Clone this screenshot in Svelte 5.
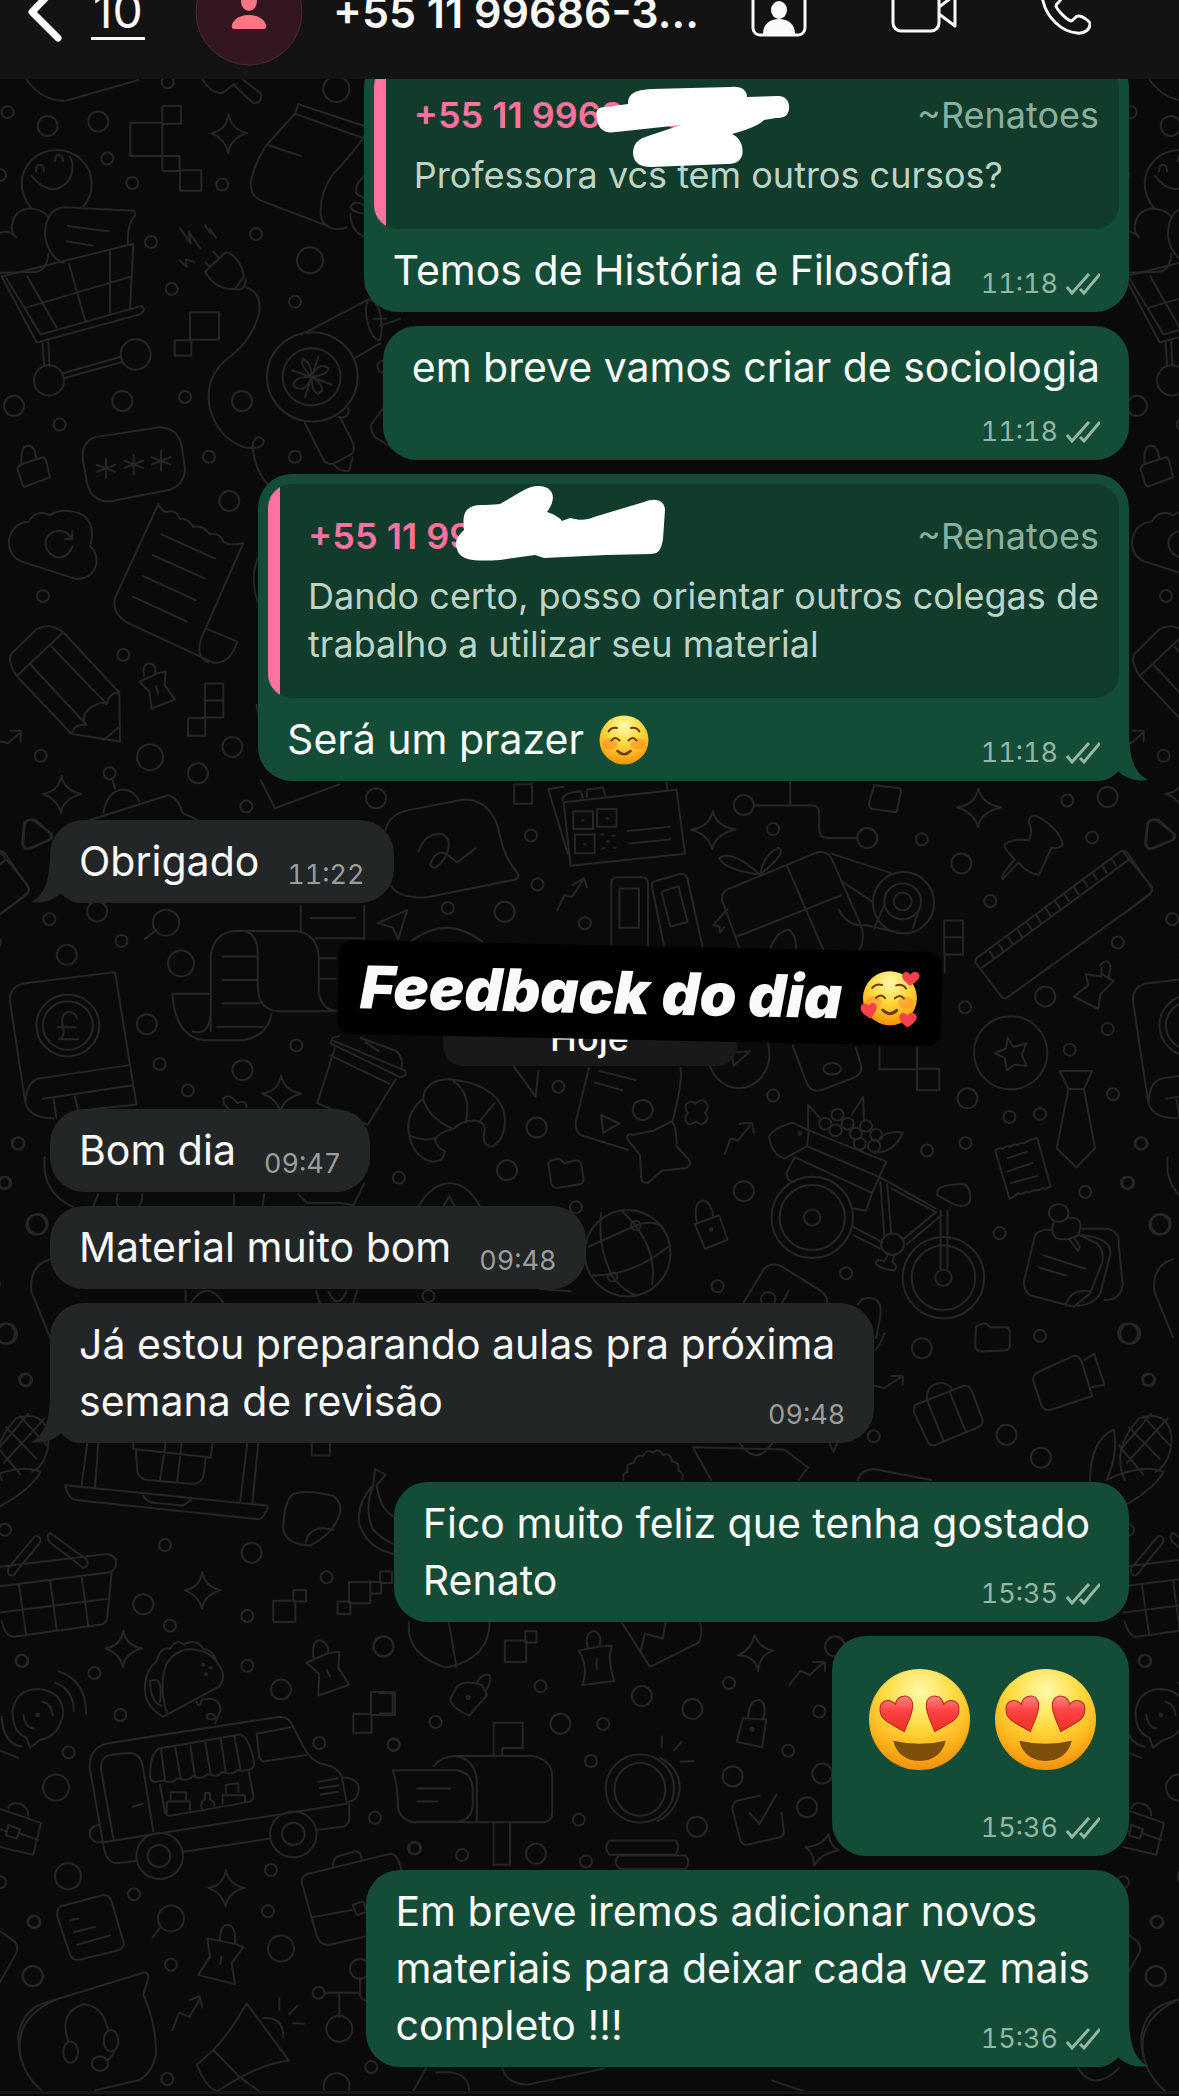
<script lang="ts">
    interface Quote {
        phone: string;
        author: string;
        text: string;
        mark: string;
        markClass: string;
    }

    interface Message {
        text?: string;
        time: string;
        mine?: boolean;
        quote?: Quote;
        emoji?: "smile" | "hearts";
        // "beside": time after the text, "over": time in the last line, "below": time on its own line
        layout: "beside" | "over" | "below";
        tail?: boolean;
    }

    interface Sketch {
        x: number;
        y: number;
        sx: number;
        sy: number;
        small: number[][];
        medium: number[][];
        large: number[][];
        ellipses: number[][];
        paths: string[];
    }

    const contact = "+55 11 99686-3...";

    const markA =
        "M11 38C9 30 12 27 20 27L42 24C42 14 48 10 66 9L145 7C155 6 161 10 161 17L192 16C200 16 204 22 203 29C202 36 198 38 190 38L178 40C172 46 160 50 146 54C155 58 158 68 156 76C153 82 150 84 140 84L65 87C53 87 47 82 47 72C48 62 53 59 62 56L95 45L30 52C18 54 12 49 11 38Z";
    const markB =
        "M10 67C9 61 13 56 18 51C17 42 17 34 22 30C28 24 40 27 54 25C72 15 82 6 94 7C108 8 111 20 101 33C109 36 113 38 116 42L124 39C135 42 141 41 148 38L198 23C210 18 219 22 219 31L217 60C215 72 212 75 204 75L160 76L98 79L89 76L54 81C36 82 17 83 12 73Z";

    const earlier: Message[] = [
        {
            text: "Temos de História e Filosofia",
            time: "11:18",
            mine: true,
            layout: "beside",
            quote: {
                phone: "+55 11 99686-3••4",
                author: "~Renatoes",
                text: "Professora vcs tem outros cursos?",
                mark: markA,
                markClass: "mark-a",
            },
        },
        { text: "em breve vamos criar de sociologia", time: "11:18", mine: true, layout: "below" },
        {
            text: "Será um prazer",
            time: "11:18",
            mine: true,
            emoji: "smile",
            layout: "beside",
            tail: true,
            quote: {
                phone: "+55 11 99686-••",
                author: "~Renatoes",
                text: "Dando certo, posso orientar outros colegas de\ntrabalho a utilizar seu material",
                mark: markB,
                markClass: "mark-b",
            },
        },
        { text: "Obrigado", time: "11:22", layout: "beside", tail: true },
    ];

    const today: Message[] = [
        { text: "Bom dia", time: "09:47", layout: "beside" },
        { text: "Material muito bom", time: "09:48", layout: "beside" },
        {
            text: "Já estou preparando aulas pra próxima\nsemana de revisão",
            time: "09:48",
            layout: "over",
            tail: true,
        },
        {
            text: "Fico muito feliz que tenha gostado\nRenato",
            time: "15:35",
            mine: true,
            layout: "over",
        },
        { time: "15:36", mine: true, emoji: "hearts", layout: "below" },
        {
            text: "Em breve iremos adicionar novos\nmateriais para deixar cada vez mais\ncompleto !!!",
            time: "15:36",
            mine: true,
            layout: "over",
            tail: true,
        },
    ];

    const sparkle = (x: number, y: number) =>
        `M${x} ${y - 43}q8 35 56 42q-52 12 -57 44q-10 -32 -52 -44q45 -5 53 -42z`;
    const asterisk = (x: number, y: number) =>
        `M${x} ${y - 22}v44M${x - 28} ${y - 8}l56 16M${x - 28} ${y + 8}l56 -16`;
    const ticks = Array.from({ length: 14 }, (_, i) => `M${1104 + i * 23} ${385 - i * 16}l10 14`).join("");

    // Wallpaper drawings, one block per area of the tile
    const sketches: Sketch[] = [
        {
            x: 0, y: 80, sx: 0.3333, sy: 0.4464,
            small: [[23, 72], [322, 176], [397, 231], [667, 234], [453, 363], [515, 468], [768, 345], [885, 497], [179, 772], [555, 710], [627, 844], [885, 844], [129, 1156], [370, 1288], [122, 1514], [329, 1553], [0, 213], [503, 5], [1150, 642]],
            medium: [[143, 103], [295, 93], [42, 730], [367, 719], [726, 719], [688, 943], [697, 1494], [594, 1553]],
            large: [[1009, 20], [930, 404], [450, 1517]],
            ellipses: [[147, 673, 45, 34], [407, 615, 45, 34], [937, 665, 136, 100], [935, 665, 87, 64]],
            paths: [
                "M80 0Q130 50 200 46L415 0M608 0Q640 35 670 28L705 8M700 10L760 52Q790 50 782 30L730 0",
                "M487 58h56v40h-56zM391 96h96v74h-96zM487 170h52v34h-52zM540 202h64v46h-64z",
                sparkle(686, 120),
                "M895 54L1104 106L1090 130L885 76L895 54M885 76L800 145Q760 190 752 232Q752 262 790 272L975 325Q1010 340 1040 330M1090 130Q1040 180 1000 210Q960 250 962 300Q964 320 985 328M800 145L903 170M1100 210Q1060 235 1070 255L1104 270M1104 285Q1060 265 1052 285Q1060 300 1104 300M1052 300Q1050 340 1104 355",
                "M95 289Q65 262 65 232A105 75 0 0 1 275 232Q275 262 250 284M95 215Q150 265 200 230Q230 200 210 172M108 205q0 -15 12 -15q12 0 12 15M165 182q0 -14 10 -14q14 0 15 14",
                "M145 308Q130 290 90 288Q40 290 35 330Q35 345 48 352Q25 335 0 342M145 390Q140 430 100 430L0 432",
                "M190 410Q145 395 135 350Q135 290 190 285L400 293Q412 300 400 308Q380 330 384 370M203 327L326 339M200 361L278 371",
                "M5 440L400 367L390 513M5 440L110 588L420 525Q440 515 425 506L122 570L20 445M82 440L170 555M207 412L256 540M330 384V520M78 510L395 440M128 590L132 640M145 586L148 640M190 657L362 620M192 668L365 632",
                "M540 332L572 366L566 340L600 376M615 325L632 344L630 334L648 353M538 404L560 418L558 402L584 408",
                "M615 430L678 385Q720 395 732 440L705 468Q650 472 615 430zM705 468Q735 475 738 445M640 385l15 12M615 408l15 10M738 465Q785 475 778 520Q760 580 690 620Q615 660 628 730Q650 800 730 822Q790 830 792 808Q770 790 758 815Q760 870 805 908",
                "M570 520h87v62h-87zM524 583h50v34h-50z",
                "M935 665Q895 635 910 625Q935 635 935 665Q955 630 985 645Q985 660 935 665Q985 690 955 703Q935 700 935 665Q915 705 880 685Q880 665 935 665M955 620L915 710M876 650L995 682",
                "M905 570L1105 492M1060 625L1140 590M1105 492Q1090 510 1105 550Q1120 585 1140 582Q1150 560 1140 520Q1125 490 1105 492zM1120 535h40M1140 550L1200 535M915 768L970 850Q980 862 1000 860L1050 840Q1065 835 1060 815L1020 755M1000 860Q1020 880 1048 875L1058 845M1015 755Q1050 760 1045 735",
                "M1165 720L1115 770Q1110 785 1125 800L1200 835",
                "M285 800L480 778Q535 780 545 820L555 870Q555 905 510 918L330 944Q275 945 262 905L248 850Q245 810 285 800z",
                asterisk(318, 870) + asterisk(401, 861) + asterisk(483, 853),
                "M60 862L128 845Q135 845 138 852L150 890L75 911Q68 911 66 903L52 870zM65 860Q60 819 85 819Q105 820 109 849",
                "M85 990Q40 990 27 1030Q25 1070 70 1080L225 1117Q280 1120 290 1080Q290 1055 270 1045Q290 1000 250 975Q190 955 150 975Q110 960 85 990zM218 1045Q200 1075 165 1068Q130 1055 138 1028Q155 1005 195 1012L215 1025M217 1010V1028H195",
                "M475 950L345 1160Q335 1195 380 1215L640 1305Q690 1310 712 1258L622 1230M475 950q15 22 30 17q25 -5 35 17q20 -5 40 17q30 -5 50 17q30 -5 40 17q20 10 60 2L610 1240Q580 1290 625 1305M485 1018L645 1072M458 1064L615 1117M428 1111L587 1165M400 1158L560 1213",
                "M50 1335Q20 1300 35 1285L110 1230Q150 1215 190 1237L358 1372L360 1482L215 1465zM50 1335L190 1237M92 1310L260 1445Q240 1430 265 1410Q300 1390 320 1398Q330 1370 358 1372M155 1270L320 1398M260 1445Q225 1440 215 1465M312 1478L360 1448",
                "M432 1335Q425 1308 448 1307Q472 1310 465 1330L497 1325L494 1355L525 1388L455 1408L448 1370L418 1348L465 1332M468 1358l6 15",
                "M615 1352h55v76h-55zM615 1390h55M564 1429h52v40h-52z",
                "M0 1482L25 1485L60 1462M30 1458h32v24M780 1060Q740 1120 785 1190M770 1400L790 1480",
            ],
        },
        {
            x: 0, y: 780, sx: 0.3571, sy: 0.4337,
            small: [[690, 61], [1487, 128], [1505, 241], [138, 321], [340, 371], [1254, 295], [830, 612], [447, 655], [526, 716], [52, 838], [15, 929], [1117, 917], [73, 1384], [1200, 1190]],
            medium: [[1053, 42], [1413, 304], [187, 403], [411, 563], [679, 669], [1503, 801], [1420, 900], [106, 1024], [20, 1277], [272, 303]],
            large: [[507, 423]],
            ellipses: [[465, 329, 37, 30], [190, 566, 88, 71], [190, 566, 70, 56]],
            paths: [
                sparkle(172, 33) + sparkle(787, 724),
                "M70 100Q80 88 100 92L145 125Q150 132 140 138L85 158Q65 160 65 145zM0 165L80 245Q85 255 75 262L0 310",
                "M290 75Q300 25 345 22Q380 25 390 50M235 97L470 35Q500 40 510 75L560 95M315 0L322 20M730 0L770 65L950 10",
                "M1080 115Q1090 80 1140 70L1300 45Q1370 45 1395 110Q1410 180 1450 215Q1455 228 1440 230L1200 270Q1120 275 1095 245M1172 165Q1190 120 1240 125Q1270 140 1245 180Q1215 215 1205 195Q1220 160 1250 170L1280 190L1332 157",
                "M1440 10h50v45h-50zM438 345L405 367",
                "M590 580V405Q600 350 660 348H830Q890 355 893 410V490Q900 530 945 533H780Q725 530 722 480V400Q720 350 680 348M590 493H483Q490 590 570 600H680Q750 590 760 540M540 580Q585 590 590 540M623 407h95M623 461h95M623 515h105M608 569h130",
                "M842 290V350M1020 290V370M870 318h125M885 365h135M895 411h45M895 458h45M1058 330L1140 300L1115 367L1100 340zM1150 372Q1250 310 1350 372",
                "M250 760L382 748L322 443L60 470Q25 480 28 510L70 740Q80 780 150 780M72 740Q75 695 110 688L358 658M120 735L372 704M150 735L158 780M210 730L218 760M215 550Q210 533 190 535Q170 540 175 565Q185 590 165 598H218M162 570h50",
                "M950 590Q925 592 927 608L1120 685Q1140 685 1135 670L930 600M1010 595L1110 625Q1130 640 1125 665M938 618L888 745L1030 795L1108 690M925 635L1090 700M1025 605L1060 625",
                "M1185 735Q1190 690 1260 690Q1380 700 1410 760Q1425 820 1380 845Q1350 845 1355 815Q1365 790 1330 785Q1290 785 1270 805Q1230 810 1218 830Q1225 850 1245 855Q1245 880 1210 880Q1150 870 1143 800Q1145 760 1185 735Q1200 780 1270 805M1270 695Q1320 720 1305 790M1150 820Q1190 835 1218 825M1345 785L1385 745",
                "M1440 662L1500 730L1508 670M690 755Q690 735 665 745Q640 720 625 735Q625 750 640 757",
                "M125 870Q115 950 205 985M260 985L275 955M330 955Q320 985 340 985H385Q400 975 398 955M655 985V955M740 955L735 985M835 955L860 975H950L990 980L1020 930M1170 985Q1210 930 1260 930Q1310 930 1345 985M1240 985L1258 960L1275 985",
                "M140 1105Q80 1120 88 1180L140 1285M520 1205V1178M535 1205Q580 1150 625 1205M885 1178L895 1205M1000 1178L990 1205M920 1180Q945 1225 970 1180",
            ],
        },
        {
            x: 540, y: 780, sx: 0.4075, sy: 0.4464,
            small: [[572, 110], [937, 133], [1294, 46], [1355, 129], [1105, 271], [110, 321], [1418, 364], [1043, 509], [1393, 558], [1300, 604], [45, 687], [572, 707], [1406, 704], [1152, 755], [1227, 748], [1474, 814], [1044, 813], [950, 830], [1440, 902], [1338, 923], [88, 957], [1128, 1015], [751, 1105], [436, 1134], [1227, 1245], [1492, 1343], [819, 1470]],
            medium: [[1393, 38], [1034, 187], [1240, 485], [1049, 713], [500, 921], [1520, 996], [937, 1273], [1443, 1240], [1145, 1467], [1229, 1518], [252, 739], [500, 56], [803, 130]],
            large: [],
            ellipses: [
                [892, 275, 75, 69], [890, 272, 45, 40], [890, 272, 22, 20], [1155, 611, 90, 82], [488, 615, 75, 75], [717, 647, 22, 13],
                [668, 980, 100, 91], [668, 980, 80, 73], [668, 980, 20, 18], [990, 1115, 100, 91], [990, 1115, 78, 72], [990, 1115, 20, 18],
                [865, 1040, 28, 24], [215, 1060, 105, 97], [235, 998, 12, 10], [178, 1113, 12, 10], [1273, 970, 24, 20], [420, 1007, 3, 3], [638, 792, 3, 3], [560, 1163, 18, 16],
                [700, 770, 15, 13], [730, 750, 15, 13], [755, 770, 15, 13], [725, 785, 15, 13], [775, 792, 15, 13], [800, 775, 15, 13], [825, 795, 15, 13], [820, 820, 15, 13], [785, 815, 15, 13],
            ],
            paths: [
                "M58 50L335 22L356 165L75 192zM68 165L20 20L58 15M55 45Q55 28 100 25L105 40M115 38V22L155 17L160 36M310 5L313 22",
                "M82 70h48v40h-48zM140 65h48v40h-48zM86 122h48v42h-48zM103 90h4M163 86h4M108 144h4M150 122h6M178 125h6M164 138h6M153 153h6M180 152h6M215 114L318 105M218 142L320 133",
                sparkle(424, 112) + sparkle(1076, 62),
                "M524 57H670Q685 57 685 75V110Q685 130 705 130H780M614 0V57M820 12L880 18Q888 20 885 30L875 72L815 65Q805 60 808 50z",
                "M1200 95Q1200 75 1222 82Q1275 110 1283 145Q1275 155 1255 152L1225 212Q1195 210 1175 185L1135 222Q1128 215 1165 178Q1135 150 1140 145Q1160 130 1200 135Q1210 115 1200 95z",
                "M1490 95Q1500 85 1515 92L1552 118Q1560 130 1550 135L1495 155Q1485 150 1485 140zM42 292L60 258L78 262L105 225M80 235L108 220L115 240",
                "M175 375V232Q175 218 190 218H250Q265 218 265 232V375M195 243h48v88h-48zM305 375L275 240Q272 228 285 226L345 210Q358 210 362 222L400 378M298 250L340 238L362 318L320 328z",
                "M490 378L447 270Q445 250 460 245L680 162Q705 158 715 175L785 320Q800 350 785 380M485 350L740 258M605 190L695 380M540 212Q450 200 440 175Q470 155 540 212Q550 165 585 152Q610 160 540 212M565 378Q580 340 610 335Q630 345 628 378",
                "M715 165L860 208M742 228L815 272M733 290Q755 330 800 325L885 343M820 332L845 280M915 332L930 290M460 290L425 325L440 328L442 342L452 330",
                "M992 315h46v76h-46zM992 352h46M993 391v40M833 600v48h95M925 600v95h55v-48h-55",
                "M1070 400L1425 160Q1435 155 1445 168L1500 240Q1503 252 1495 258L1145 488Q1135 492 1128 480L1068 408zM1085 420L1443 180" + ticks,
                "M1375 415Q1395 395 1400 420L1395 445M1378 420L1378 440L1340 435L1345 460L1310 485L1370 513L1375 480L1408 450L1378 435",
                "M1148 578l14 20 32 -8 -12 25 12 25 -30 -2 -18 12 -6 -28 -25 -10 28 -10z",
                "M1275 652h80l-20 40h-38zM1297 692L1268 825L1316 868L1362 825L1335 692",
                "M1117 830q10 -8 18 -4q10 -8 18 -4q10 -8 18 -4q10 -8 18 -4q10 -8 31 -12L1253 910q-12 8 -20 4q-12 8 -20 4q-12 8 -20 4q-12 8 -20 4q-10 8 -21 12zM1148 847L1195 833M1147 877L1208 858M1155 903L1220 887",
                "M120 645L88 765Q85 790 105 797L215 828M345 645Q350 680 325 765M145 652L235 672M135 678L202 695M150 750L195 770L155 790z",
                "M322 765Q335 770 335 820L365 850Q375 865 355 870L300 875L265 902Q245 905 248 880L245 840L215 805Q210 790 230 795L280 785z",
                "M360 725q10-10 22 0q15-15 28 0q5 10-5 20q10 15 0 22q-10 8-22-2q-18 12-25 0q-5-10 5-20q-10-10-3-20z",
                "M453 838L468 803L485 808L515 775M490 770L520 768L525 790M470 610L515 608L475 640zM620 595L655 680Q665 700 690 695L775 665Q795 655 785 630L775 600",
                "M20 858Q30 848 50 850L60 858L90 852Q100 852 102 865L107 895Q105 905 95 906L40 914Q28 912 27 900zM1070 1225Q1085 1215 1095 1218L1105 1226H1145Q1155 1230 1153 1245V1268Q1150 1278 1140 1278L1078 1280Q1068 1276 1068 1265z",
                "M660 785L850 855L815 925L625 845M655 820L835 890M562 800Q570 780 620 768L660 785L655 820L600 848Q570 840 562 800zM625 845L605 880Q605 900 625 900M658 780V728L688 758M765 750L793 710L795 765M835 800Q860 785 890 790Q870 835 820 835",
                "M835 890L972 960M852 905L862 1015M835 900L845 1020M862 915L972 968L890 1030M766 1000L840 1035M770 1020L835 1050M983 965V1095M1000 965V1095M975 920Q985 905 1040 905Q1060 915 1055 945Q1040 960 1015 950L975 930zM855 1060L845 1078Q820 1070 825 1085Q840 1098 870 1098Q880 1090 865 1080L870 1062M815 925L800 965L770 960M900 1040L985 975",
                "M120 1045L235 998Q270 985 300 1000M150 970Q140 1050 180 1115Q210 1150 240 1155M200 965Q290 1040 275 1130M130 1110Q230 1110 315 1045",
                "M380 995L440 975L460 1030L405 1050zM385 992Q375 945 400 942Q420 945 425 978M500 1170L550 1095Q565 1080 590 1088L690 1145Q705 1155 705 1170M610 1145L595 1170",
                "M780 1175Q790 1155 820 1162Q840 1170 835 1200L825 1250M845 1240Q830 1280 812 1280M0 1140L75 1145",
                "M1255 1008Q1225 1005 1215 1020L1187 1125Q1190 1150 1205 1155L1310 1180L1350 1150L1380 1080Q1385 1045 1360 1035L1325 1020M1330 1020Q1400 1025 1400 1060L1375 1150Q1360 1175 1320 1178M1330 1005H1395Q1425 1015 1420 1040L1430 1130Q1425 1165 1385 1165M1290 1178Q1300 1140 1350 1145M1235 1065L1338 1095M1225 1092L1290 1110M1262 988Q1250 1010 1265 1025Q1290 1035 1320 1020Q1335 990 1315 982L1295 980M1300 1030L1320 1055L1325 1045L1310 1025",
                "M1225 1325L1310 1290Q1325 1290 1330 1305L1355 1380L1250 1412Q1235 1412 1230 1400L1210 1345Q1210 1330 1225 1325zM1335 1300L1360 1285L1385 1355L1355 1360",
                "M920 1400L1040 1357Q1055 1355 1060 1370L1085 1430Q1090 1445 1075 1450L970 1490Q955 1492 950 1480L917 1415zM950 1390Q945 1355 985 1350Q1010 1355 1010 1368M950 1390L990 1480M1005 1370L1045 1460M812 1355L845 1362L885 1338M862 1335H890V1355",
                "M1350 1568Q1350 1480 1408 1455Q1420 1510 1390 1568M1435 1568Q1400 1500 1470 1430Q1540 1410 1550 1470Q1550 1530 1510 1550M1420 1490L1480 1555M1445 1450L1520 1520M1480 1425L1545 1490M1540 1430L1440 1530M1500 1420L1425 1500M1390 1568Q1480 1530 1530 1550Q1500 1600 1380 1650Q1350 1620 1350 1568",
                "M205 1568q-5-15 10-18q-5-20 15-20q5-20 22-15q10-18 25-8q15-12 25 5q20-5 22 15q20 0 15 20q15 5 10 20M375 1495L420 1568M375 1495L600 1500L658 1540L635 1568M490 1485Q530 1540 570 1485M780 1568Q790 1540 830 1545L960 1568M710 1485L720 1505L730 1485",
            ],
        },
        {
            x: 0, y: 1430, sx: 0.3333, sy: 0.4247,
            small: [[495, 271], [510, 461], [742, 438], [980, 347], [67, 544], [283, 572], [361, 671], [206, 759], [742, 555], [958, 737], [1181, 742], [1125, 913], [813, 1036], [402, 1093], [103, 1159], [804, 1133], [513, 1259], [502, 1528], [1114, 1500], [15, 235], [1242, 985], [0, 1065], [956, 1325]],
            medium: [[755, 289], [430, 410], [1150, 509], [843, 611], [99, 1286], [1080, 1269]],
            large: [[168, 842], [204, 1051], [843, 1221], [1010, 1545], [513, 1150], [1018, 1410]],
            ellipses: [[479, 1003, 70, 54], [477, 1003, 34, 26], [880, 952, 70, 54], [880, 951, 34, 26], [212, 1465, 22, 25], [333, 1438, 22, 25], [300, 1492, 25, 17], [113, 671, 4, 3], [610, 553, 3, 2], [632, 560, 3, 2], [618, 575, 3, 2]],
            paths: [
                "M0 322L320 292Q350 295 348 315Q345 330 330 335L0 368M335 335L322 440Q320 455 305 458L40 487Q15 485 5 450M57 365L78 480M150 353L170 470M245 345L265 462M0 430L320 398M25 325L105 250Q125 248 120 265L40 342Q20 345 25 325zM150 242L260 305Q270 320 250 325L150 265Q135 250 150 242z",
                "M195 130L800 178Q808 185 795 195Q790 210 775 210L225 165Q205 160 195 130zM430 155Q445 172 465 172L550 178L572 165M262 30L245 130M295 30L285 135M742 30L720 172M775 30L757 175M400 30V45L632 65L638 30M408 50L412 100Q420 115 440 118L580 127Q610 125 612 100L617 65M497 30L480 120M545 30L532 122",
                sparkle(607, 378) + sparkle(370, 515) + sparkle(678, 1079),
                "M880 150Q920 140 1000 155Q1030 175 1018 200Q1000 245 930 272Q860 270 850 235Q850 170 880 150zM917 265Q930 220 1000 235",
                "M1125 92L1157 105L1130 130Q1140 190 1185 205M1125 92L1120 130Q1070 170 1078 220Q1100 280 1185 292M1120 130Q1090 190 1120 235Q1150 260 1185 270M935 30v30h55v-30",
                "M820 402h66v50h-66zM880 377h38v27h-38zM1013 404h38v29h-38zM1047 358h64v50h-64zM1111 358h33v27h-33zM1140 333h36v27h-36zM1060 669h55v44h-55zM1113 617h72v54h-72z",
                "M940 535Q935 495 960 495Q985 500 985 525L1018 522L1015 560L1048 600L955 625L958 575L920 548L985 525M980 565l10 15M660 1200Q660 1165 685 1165Q710 1170 705 1210L730 1218L695 1255L705 1305L595 1283L630 1240L622 1197L705 1210M665 1240l-5 18",
                "M490 675L655 605Q675 590 668 570Q640 525 600 520Q540 505 500 550Q475 600 500 665M490 675Q430 650 435 600Q440 560 470 545Q480 510 510 515Q530 490 550 505Q590 490 610 515Q640 520 650 545M450 590Q450 640 485 650M455 590Q490 580 480 640M590 640Q600 660 605 635Q660 625 662 660L645 690M645 680Q620 685 620 672Q640 660 650 685",
                "M90 748L80 725Q35 710 38 660Q50 610 115 610Q185 615 190 665Q180 720 120 730zM70 670Q75 700 100 703M128 640Q155 645 158 672M165 595Q220 610 222 662M175 568Q260 590 258 668M5 675Q10 740 65 745M0 755L55 772",
                "M320 738L840 675Q870 675 880 700L910 745Q930 775 960 785Q1010 790 1025 815L1040 875M1048 878V915Q1045 935 1020 935L950 942M810 962L550 993M410 1015L350 1020Q320 1018 312 985L270 800Q265 750 320 738M315 970L1040 880M340 962L303 800Q300 770 330 765L390 760Q420 762 428 790L460 945M398 887L428 880",
                "M478 750L720 717Q745 720 762 780Q765 800 742 800q-15 5-30 0q-15 15-45 5q-15 15-45 5q-15 15-45 5q-15 15-45 5q-15 15-45 5Q450 835 450 815Q450 760 478 750M483 750L495 825M525 745L542 820M570 738L585 815M615 732L632 810M662 726L677 805M703 722L722 800M480 835L495 900Q500 910 515 908L750 875Q762 870 760 860L745 800",
                "M870 700L770 715L778 770Q782 782 795 780L920 765M955 828L1015 820M960 843L1015 837M962 858L1015 852M1030 818Q1080 820 1076 850Q1070 875 1045 875M295 930Q265 935 270 955Q280 975 305 970M500 900V875H570V895M512 870V853H558V870M605 890Q600 875 615 870V855H630V870Q645 875 643 885M668 880V860H735V875M678 855V835L715 832V852",
                "M0 892L123 925L100 1000L0 982M25 890Q30 875 60 880Q85 888 85 908M25 930L60 940L50 962L18 955zM60 950L115 965M0 940L18 945",
                "M180 1122L310 1095Q330 1095 335 1110L372 1210Q370 1220 355 1225L235 1248Q215 1248 210 1235L172 1145Q170 1128 180 1122zM210 1155L235 1150M222 1182L285 1170M232 1212L330 1190M480 1172L457 1195M0 1180L45 1205Q55 1215 50 1230L0 1300",
                "M1205 1040Q1195 998 1170 998L925 1045Q905 1050 905 1065L950 1190Q960 1215 990 1212L1110 1190M940 1147L1055 1130M1095 1120L1110 1118M1058 1118L1090 1110L1100 1135L1070 1142zM1000 1030Q995 1005 1030 1000L1065 992Q1085 992 1085 1012",
                "M125 1555Q55 1510 55 1430Q65 1360 150 1345L430 1278Q445 1275 445 1290L430 1330Q470 1400 468 1470Q460 1510 420 1530L285 1555M205 1440Q175 1370 250 1352Q310 1355 325 1415M345 1460Q335 1480 318 1485",
                "M517 1413L537 1372L568 1382L600 1340M570 1342L598 1333L607 1360M590 1495L640 1460Q690 1420 740 1350L867 1485Q800 1490 720 1525L650 1557Q620 1550 590 1495zM640 1460L720 1525L775 1555M790 1385Q850 1380 850 1430M838 1365V1338M868 1375L892 1356M880 1397L912 1398",
                "M978 1325H1080M1018 1325V1382M1080 1290V1330Q1085 1345 1110 1345",
            ],
        },
        {
            x: 380, y: 1460, sx: 0.5096, sy: 0.4056,
            small: [[315, 558], [109, 646], [438, 651], [685, 550], [862, 620], [801, 717], [414, 742], [390, 887], [69, 957], [161, 974], [404, 990], [27, 701], [1500, 495], [1524, 1138]],
            medium: [[514, 582], [613, 614], [354, 650], [893, 460], [692, 780], [838, 856], [306, 971], [622, 904], [1522, 1272], [868, 773], [7, 460]],
            large: [],
            ellipses: [[510, 810, 67, 84], [510, 812, 50, 65], [173, 585, 3, 4], [730, 664, 3, 4]],
            paths: [
                "M57 400Q50 480 130 512Q215 490 215 400M135 400L150 510M245 445h42v53h-42zM285 422h22v28h-22zM0 575h25v50h-25",
                "M408 465Q400 425 420 422Q438 430 430 460L455 458Q445 490 460 545L397 555Q410 510 390 470L430 460M425 490v25M475 402L530 510L625 450Q635 430 628 402M512 470L520 428L555 440L560 402",
                "M735 432Q745 465 772 470Q745 480 742 520Q735 480 703 482Q730 465 735 432M803 555L825 520L843 530L870 500M850 498H873V520",
                "M150 560Q165 540 200 555L210 580L175 630Q140 610 138 590zM190 550Q200 525 215 530Q220 545 207 570M712 637L758 640L750 708L700 695zM722 635Q725 590 745 592Q760 600 752 637",
                "M25 765H150Q180 770 182 810V850Q180 890 150 892H60Q35 880 35 850Q35 800 25 765M105 755Q120 730 150 730H300Q338 740 338 780V870Q338 893 320 893H60M150 730Q190 740 190 800V890M223 730V648H280V710H240V730M223 898V998H255V898M73 810H138M73 842H112",
                "M550 735Q590 760 588 815Q580 870 545 890M553 708V682M577 716L592 695M590 744L615 742M450 938H580Q590 955 580 973H450Q438 955 450 938zM470 975H600Q610 990 600 1008H470Q455 990 470 975z",
                "M745 828L700 840Q690 848 692 865L708 940Q712 950 722 948L785 930Q795 925 792 910L788 870M725 870L745 897L778 825M880 922Q885 955 900 962Q865 970 852 1000Q850 965 835 955Q870 950 880 922",
                "M1568 1330Q1480 1380 1500 1480M90 1500L60 1568M110 1510Q180 1500 175 1568M240 1500Q250 1540 290 1540L440 1500M770 1530L840 1560M1370 1500Q1400 1560 1450 1500",
            ],
        },
    ];
</script>

{#snippet check()}
    <svg class="check" viewBox="0 0 34 22" aria-label="Entregue">
        <path d="M1 14L6 20L23 1M14 16L18 20L34 1" />
    </svg>
{/snippet}

{#snippet smile()}
    <svg class="emoji" viewBox="0 0 100 100" role="img" aria-label="☺️">
        <circle cx="50" cy="50" r="49" fill="url(#face)" />
        <ellipse cx="22" cy="58" rx="15" ry="11" fill="#ff7a2e" opacity="0.45" />
        <ellipse cx="78" cy="58" rx="15" ry="11" fill="#ff7a2e" opacity="0.45" />
        <g fill="none" stroke="#6b3a06" stroke-width="4" stroke-linecap="round">
            <path d="M19 33Q25 24 36 26M64 26Q75 24 81 33" />
            <path d="M25 51Q32 41 41 51M59 51Q68 41 75 51" />
            <path d="M37 72Q50 85 63 72" stroke-width="5" />
        </g>
    </svg>
{/snippet}

{#snippet heartEyes()}
    <svg class="emoji" viewBox="0 0 100 100" role="img" aria-label="😍">
        <circle cx="50" cy="50" r="50" fill="url(#face)" />
        <g fill="url(#heart)" stroke="#b3271d" stroke-width="1">
            <path d="M35 62C24 55 11 51 11 41C10 31 20 28 26 35C28 25 40 24 43 33C45 42 38 53 35 62Z" />
            <path d="M65 62C76 55 89 51 89 41C90 31 80 28 74 35C72 25 60 24 57 33C55 42 62 53 65 62Z" />
        </g>
        <path d="M24 71Q50 77 76 71C73 84 63 91 50 91C37 91 27 84 24 71Z" fill="#7d4e09" />
    </svg>
{/snippet}

{#snippet bubble(message: Message)}
    <li class="message" class:mine={message.mine} class:tailed={message.tail}>
        {#if message.tail}
            <svg class="tail" viewBox="-20 0 50 50" aria-hidden="true">
                <path d="M-20 0H11C11 26 16 42 30 49C20 51 8 48 0 40C-6 47 -14 50 -20 50Z" />
            </svg>
        {/if}
        {#if message.quote}
            <blockquote class="quote">
                <div class="quote-head">
                    <span class="phone">{message.quote.phone}</span>
                    <span class="author">{message.quote.author}</span>
                    <svg class="mark {message.quote.markClass}" viewBox="0 0 220 100" aria-hidden="true">
                        <path d={message.quote.mark} />
                    </svg>
                </div>
                <p class="quote-text">{message.quote.text}</p>
            </blockquote>
        {/if}
        <div class="body {message.layout}">
            {#if message.emoji === "hearts"}
                <p class="big-emoji">{@render heartEyes()}{@render heartEyes()}</p>
            {:else}
                <p class="text">{message.text}{#if message.emoji === "smile"}&nbsp;{@render smile()}{/if}</p>
            {/if}
            <span class="meta">
                <time>{message.time}</time>
                {#if message.mine}
                    {@render check()}
                {/if}
            </span>
        </div>
    </li>
{/snippet}

<div class="page">
    <svg class="wallpaper" viewBox="0 0 1179 2096" aria-hidden="true">
        <defs>
            <radialGradient id="face" cx="50%" cy="22%" r="80%">
                <stop offset="0" stop-color="#fff9a8" />
                <stop offset="0.45" stop-color="#ffda3e" />
                <stop offset="0.75" stop-color="#fdb41c" />
                <stop offset="1" stop-color="#ef8b0c" />
            </radialGradient>
            <linearGradient id="heart" x1="0" y1="0" x2="0" y2="1">
                <stop offset="0" stop-color="#ff8583" />
                <stop offset="0.4" stop-color="#fb4444" />
                <stop offset="1" stop-color="#ee2f27" />
            </linearGradient>
            <g id="tile">
                {#each sketches as sketch}
                    <g transform="translate({sketch.x} {sketch.y}) scale({sketch.sx} {sketch.sy})">
                        {#each sketch.paths as d}
                            <path {d} />
                        {/each}
                        {#each sketch.ellipses as [cx, cy, rx, ry]}
                            <ellipse {cx} {cy} {rx} {ry} />
                        {/each}
                        {#each [sketch.small, sketch.medium, sketch.large] as dots, i}
                            {#each dots as [cx, cy]}
                                <ellipse {cx} {cy} rx={[6, 10, 13][i] / sketch.sx} ry={[6, 10, 13][i] / sketch.sy} />
                            {/each}
                        {/each}
                    </g>
                {/each}
            </g>
        </defs>
        <use href="#tile" />
        <use href="#tile" x="-1123" />
        <use href="#tile" x="1123" />
    </svg>

    <header class="topbar">
        <a class="back" href="#chats" aria-label="Voltar, 10 conversas">
            <svg class="chevron" viewBox="0 -20 36 66" aria-hidden="true">
                <path d="M31 -14L5 13L31 39" />
            </svg>
            <span class="unread">10</span>
        </a>
        <svg class="avatar" viewBox="0 0 108 108" aria-hidden="true">
            <circle cx="54" cy="54" r="53" />
            <ellipse class="person" cx="54" cy="43" rx="8" ry="10" />
            <path class="person" d="M39 71C34 71 37 57 54 57C71 57 74 71 69 71Z" />
        </svg>
        <h1 class="title">{contact}</h1>
        <div class="actions">
            <button type="button" aria-label="Contato">
                <svg width="56" height="64" viewBox="0 -20 56 64">
                    <rect x="2" y="-17" width="52" height="52" rx="7" />
                    <ellipse class="solid" cx="28" cy="10" rx="8" ry="9" />
                    <path class="solid" d="M12 34C12 24 19 19 28 19C37 19 44 24 44 34Z" />
                </svg>
            </button>
            <button type="button" aria-label="Chamada de vídeo">
                <svg width="66" height="64" viewBox="0 -20 66 64">
                    <rect x="2" y="-12" width="46" height="43" rx="8" />
                    <path d="M48 7L64 -5V26L48 14" />
                </svg>
            </button>
            <button type="button" aria-label="Chamada de voz">
                <svg width="50" height="64" viewBox="0 -20 50 64">
                    <path d="M9 -16C3 -14 0 -8 2 1C6 18 21 32 36 33C44 34 49 29 49 24C49 21 41 16 38 16C34 15 33 21 30 21C26 20 16 10 15 6C15 3 20 2 20 -2C19 -6 14 -16 9 -16Z" />
                </svg>
            </button>
        </div>
    </header>

    <main class="chat">
        <ol class="messages">
            {#each earlier as message}
                {@render bubble(message)}
            {/each}
        </ol>

        <div class="day">
            <span class="day-label">Hoje</span>
            <div class="sticker">
                <strong>Feedback do dia</strong>
                <svg class="love" viewBox="0 0 60 60" role="img" aria-label="🥰">
                    <circle cx="30" cy="30" r="27" fill="url(#face)" />
                    <ellipse cx="14" cy="34" rx="8" ry="6" fill="#ff7a2e" opacity="0.4" />
                    <ellipse cx="46" cy="34" rx="8" ry="6" fill="#ff7a2e" opacity="0.4" />
                    <g fill="none" stroke="#6b3a06" stroke-width="2" stroke-linecap="round">
                        <path d="M12 20Q16 15 22 17M36 17Q42 15 46 20M16 30Q21 25 25 30M35 30Q40 25 44 30" />
                        <path d="M23 42Q30 49 37 42" stroke-width="3" />
                    </g>
                    <g fill="#f5414d">
                        <path d="M50 17C44 13 41 10 42 6C44 2 48 3 50 6C52 2 57 2 59 6C60 10 55 14 50 17Z" />
                        <path d="M11 51C5 47 0 44 1 39C2 35 7 35 9 38C11 34 16 34 17 39C17 43 14 47 11 51Z" />
                        <path d="M48 59C43 55 39 52 40 47C42 43 46 44 48 47C50 43 55 43 57 47C58 51 54 55 48 59Z" />
                    </g>
                </svg>
            </div>
        </div>

        <ol class="messages">
            {#each today as message}
                {@render bubble(message)}
            {/each}
        </ol>
    </main>
</div>

<style>
    :global(body) {
        background: #0a0a0a;
    }

    .page {
        position: relative;
        overflow: hidden;
        border-bottom: 3px solid #171717;
        background: #0a0a0a;
        color: #fafafa;
        font-family: Inter, "Liberation Sans", sans-serif;
    }

    .wallpaper {
        position: absolute;
        top: 0;
        left: 0;
        width: 100%;
        fill: none;
        stroke: #262626;
        stroke-width: 2px;
        stroke-linecap: round;
        stroke-linejoin: round;
    }

    .wallpaper path,
    .wallpaper ellipse {
        vector-effect: non-scaling-stroke;
    }

    .topbar {
        position: relative;
        z-index: 1;
        display: flex;
        align-items: flex-end;
        box-sizing: border-box;
        height: 79px;
        padding: 0 88px 13px 27px;
        overflow: hidden;
        background: #131313;
    }

    .back,
    .title,
    .actions {
        display: flex;
        align-items: center;
        height: 108px;
    }

    .back {
        gap: 28px;
        margin-right: 50px;
        color: #fafafa;
        text-decoration: none;
    }

    .chevron {
        width: 36px;
        height: 66px;
        fill: none;
        stroke: #fafafa;
        stroke-width: 7px;
        stroke-linecap: round;
        stroke-linejoin: round;
    }

    .unread {
        width: 54px;
        border-bottom: 3px solid #fafafa;
        font-size: 48px;
        line-height: 52px;
        text-align: center;
    }

    .avatar {
        flex: none;
        width: 108px;
        height: 108px;
        margin-right: 30px;
        fill: #321620;
        stroke: #4a2a36;
    }

    .person {
        fill: #ff7583;
        stroke: none;
    }

    .title {
        flex: 1;
        margin: 0;
        font-size: 43px;
        font-weight: 600;
        white-space: nowrap;
    }

    .actions {
        gap: 84px;
    }

    .actions button {
        display: flex;
        padding: 0;
        border: 0;
        background: none;
        cursor: pointer;
    }

    .actions svg {
        fill: none;
        stroke: #fafafa;
        stroke-width: 3px;
        stroke-linejoin: round;
    }

    .actions .solid {
        fill: #fafafa;
        stroke: none;
    }

    .chat {
        position: relative;
        margin-top: -26px;
        padding: 0 50px 24px;
    }

    .messages {
        display: flex;
        flex-direction: column;
        align-items: flex-start;
        gap: 14px;
        margin: 0;
        padding: 0;
        list-style: none;
    }

    .message {
        position: relative;
        border-radius: 34px;
        background: #232626;
    }

    .message.mine {
        align-self: flex-end;
        background: #144d37;
    }

    .message.tailed:not(:last-child) {
        margin-bottom: 25px;
    }

    .tail {
        position: absolute;
        right: -19px;
        bottom: 0;
        width: 50px;
        height: 50px;
        fill: #144d37;
    }

    .message:not(.mine) .tail {
        right: auto;
        left: -19px;
        fill: #232626;
        transform: scaleX(-1);
    }

    .quote {
        margin: 0 10px;
        padding: 28px 20px 30px 40px;
        border-radius: 24px;
        background: linear-gradient(90deg, #ff729f 12px, #113c2b 12px);
        font-size: 36px;
        line-height: 48px;
    }

    .message:has(.quote) {
        padding-top: 10px;
    }

    .quote-head {
        position: relative;
        display: flex;
        justify-content: space-between;
        gap: 36px;
        margin-bottom: 12px;
    }

    .phone {
        color: #ff729f;
        font-weight: 600;
    }

    .author {
        color: #8baf9e;
    }

    .quote-text {
        margin: 0;
        color: #bed3c7;
        white-space: pre-line;
    }

    .mark {
        position: absolute;
        width: 220px;
        height: 100px;
        fill: #fff;
    }

    .mark-a {
        top: -11px;
        left: 172px;
    }

    .mark-b {
        top: -33px;
        left: 138px;
    }

    .body {
        position: relative;
        display: flex;
        justify-content: space-between;
        align-items: flex-end;
        gap: 28px;
        padding: 13px 29px;
    }

    .body.below {
        flex-direction: column;
        gap: 21px;
    }

    .body.over {
        display: grid;
    }

    .body.over .text,
    .body.over .meta {
        grid-area: 1 / 1;
    }

    .body.over .text {
        padding-right: 10px;
    }

    .body.over .meta {
        justify-self: end;
    }

    .text {
        margin: 0;
        font-size: 41px;
        line-height: 57px;
        white-space: pre-line;
    }

    .text .emoji {
        width: 50px;
        height: 50px;
        margin-left: 4px;
        vertical-align: -11px;
    }

    .big-emoji {
        display: flex;
        gap: 25px;
        margin: 0;
        padding: 20px 4px 22px 8px;
    }

    .big-emoji .emoji {
        width: 101px;
        height: 101px;
    }

    .meta {
        display: flex;
        align-items: center;
        gap: 8px;
        color: #9b9d9d;
        font-size: 27px;
        font-variant-numeric: tabular-nums;
        line-height: 30px;
    }

    .mine .meta {
        color: #93b6a5;
    }

    .check {
        width: 34px;
        height: 22px;
        fill: none;
        stroke: currentColor;
        stroke-width: 3px;
    }

    .day {
        position: relative;
        z-index: 1;
        display: flex;
        justify-content: center;
        padding: 103px 0 43px;
    }

    .day-label {
        width: 294px;
        padding-top: 4px;
        border-radius: 20px;
        background: #191919;
        font-size: 36px;
        font-weight: 500;
        line-height: 56px;
        text-align: center;
    }

    .sticker {
        position: absolute;
        top: 43px;
        left: calc(50% + 50px);
        display: flex;
        justify-content: center;
        align-items: center;
        gap: 18px;
        width: 604px;
        height: 94px;
        border-radius: 14px;
        background: #000;
        transform: translateX(-50%) rotate(1.2deg);
    }

    .sticker strong {
        font-size: 59px;
        font-style: italic;
        font-weight: 900;
        line-height: 64px;
        white-space: nowrap;
    }

    .love {
        width: 60px;
        height: 60px;
    }
</style>
